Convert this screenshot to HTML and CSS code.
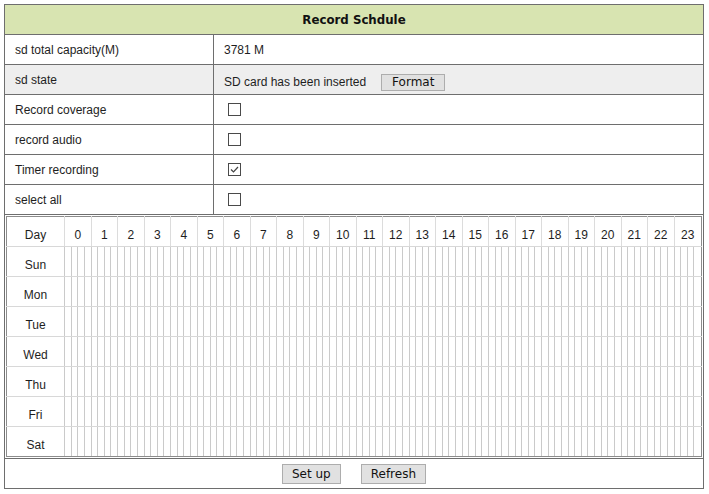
FILE: index.html
```html
<!DOCTYPE html>
<html>
<head>
<meta charset="utf-8">
<title>Record Schdule</title>
<link rel="stylesheet" href="styles.css">
</head>
<body>
<table class="main">
  <colgroup><col class="c-label"><col class="c-value"></colgroup>
  <tr><th colspan="2" class="title">Record Schdule</th></tr>
  <tr><td class="cell">sd total capacity(M)</td><td class="cell">3781 M</td></tr>
  <tr class="gray"><td class="cell">sd state</td><td class="cell cell-low">SD card has been inserted<button class="btn btn-format">Format</button></td></tr>
  <tr><td class="cell">Record coverage</td><td class="cell"><span class="cb"></span></td></tr>
  <tr><td class="cell">record audio</td><td class="cell"><span class="cb"></span></td></tr>
  <tr><td class="cell">Timer recording</td><td class="cell"><span class="cb"><svg viewBox="0 0 11 11" width="11" height="11"><path d="M2 5.5 L4.5 8 L9 3" fill="none" stroke="#444" stroke-width="1.2"/></svg></span></td></tr>
  <tr><td class="cell">select all</td><td class="cell"><span class="cb"></span></td></tr>
  <tr><td colspan="2" class="gridwrap"><table class="grid" id="grid"></table></td></tr>
  <tr><td colspan="2" class="actions"><button class="btn btn-act">Set up</button><button class="btn btn-act">Refresh</button></td></tr>
</table>
<script src="script.js"></script>
</body>
</html>
```

FILE: styles.css
```css
html, body {
  margin: 0;
  background: #fff;
}
body {
  padding: 4px;
  font-family: "Liberation Sans", Arial, sans-serif;
  font-size: 12px;
  color: #1e1e1e;
}
.main {
  width: 700px;
  border-collapse: collapse;
  table-layout: fixed;
}
.c-label { width: 209px; }
.title {
  height: 29px;
  padding: 0;
  border: 1px solid #6e6e6e;
  background: #d8e4b1;
  font-family: "DejaVu Sans", Verdana, sans-serif;
  font-size: 11.8px;
  font-weight: bold;
  color: #111;
  text-align: center;
}
.cell {
  height: 29px;
  padding: 0 10px;
  border: 1px solid #6e6e6e;
  white-space: nowrap;
}
.cell-low {
  height: 24px;
  padding-top: 5px;
}
.gray .cell { background: #eeeeee; }
.cb {
  display: inline-block;
  box-sizing: border-box;
  width: 13px;
  height: 13px;
  margin: -2px 0 0 4px;
  border: 1px solid #4a4a4a;
  background: #fff;
  vertical-align: middle;
}
.cb svg { display: block; }
.btn {
  font-family: "DejaVu Sans", Verdana, sans-serif;
  font-size: 12px;
  color: #111;
  background: #e1e1e1;
  border: 1px solid #adadad;
  border-radius: 0;
  padding: 0 9px;
  margin: 0;
  vertical-align: middle;
}
.btn-format {
  height: 17px;
  margin-left: 15px;
  padding: 0 10px;
}
.gridwrap {
  padding: 1px;
  border: 1px solid #6e6e6e;
}
.grid {
  width: 100%;
  border-collapse: collapse;
  table-layout: fixed;
  border: 1px solid #8c8c8c;
}
.grid .c-day { width: 58px; }
.grid th, .grid td {
  height: 23px;
  padding: 6px 0 0;
  font-weight: normal;
  text-align: center;
  border-bottom: 1px solid #d8d8d8;
}
.grid th { border-left: 1px solid #dcdcdc; }
.grid td { border-left: 1px solid #cacaca; }
.grid tr:last-child td { border-bottom: 1px solid #8c8c8c; }
.grid .day { border-left: 0; }
.grid .daylabel { border-left: 0; border-right: 1px solid #cacaca; }
.actions {
  height: 29px;
  padding: 0;
  border: 1px solid #6e6e6e;
  text-align: center;
}
.btn-act {
  height: 20px;
}
.btn-act + .btn-act { margin-left: 20px; }
```

FILE: script.js
```js
(function () {
  var grid = document.getElementById('grid');
  var days = ['Sun', 'Mon', 'Tue', 'Wed', 'Thu', 'Fri', 'Sat'];
  var html = '<colgroup><col class="c-day">';
  for (var i = 0; i < 96; i++) html += '<col>';
  html += '</colgroup><tr><th class="day">Day</th>';
  for (var h = 0; h < 24; h++) html += '<th colspan="4">' + h + '</th>';
  html += '</tr>';
  for (var d = 0; d < days.length; d++) {
    html += '<tr><td class="daylabel">' + days[d] + '</td>';
    for (var q = 0; q < 96; q++) html += '<td></td>';
    html += '</tr>';
  }
  grid.innerHTML = html;
})();
```
